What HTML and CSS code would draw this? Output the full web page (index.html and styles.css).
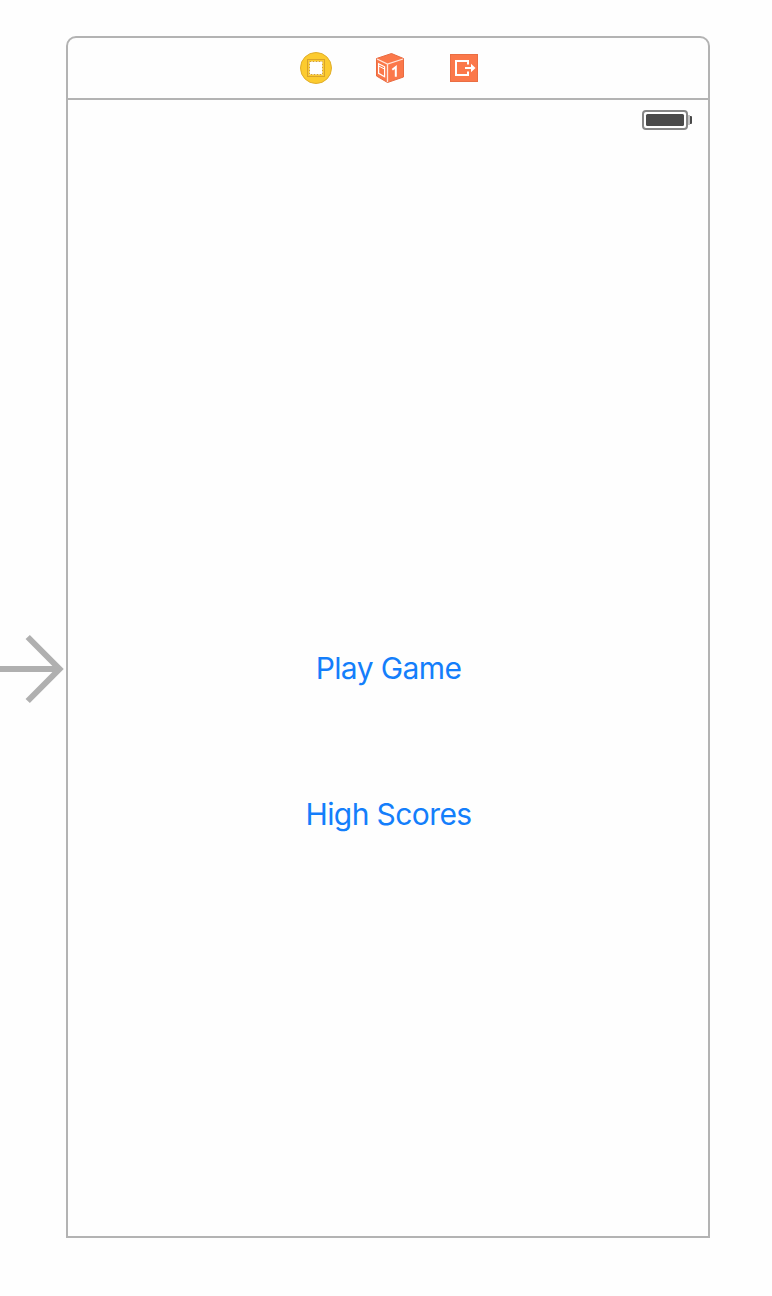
FILE: index.html
```html
<!DOCTYPE html>
<html lang="en">
<head>
<meta charset="utf-8">
<title>Storyboard</title>
<link rel="stylesheet" href="styles.css">
</head>
<body>
<main class="canvas">
  <div class="entry">
    <svg class="entry-arrow" width="66" height="70" viewBox="0 0 66 70" fill="none" stroke="#b0b0b0" stroke-width="6">
      <path d="M0 35H58M27.7 3L59.5 35L27.7 67"/>
    </svg>
  </div>
  <section class="scene">
    <header class="dock">
      <svg width="32" height="32" viewBox="0 0 32 32">
        <circle cx="16" cy="16" r="15.5" fill="#fccb2f" stroke="#e0ae2d"/>
        <rect x="7.5" y="7.5" width="17" height="17" fill="#fccb2f" stroke="#d9a42b"/>
        <rect x="9" y="9" width="14" height="14" fill="#fff"/>
        <rect x="9.5" y="9.5" width="13" height="13" fill="none" stroke="#d9a42b" stroke-dasharray="2 1"/>
      </svg>
      <svg width="32" height="32" viewBox="0 0 32 32">
        <path d="M2.5 6.5L17.5 1.5L29.5 6.5V25L13.5 30.5L2.5 24Z" fill="#fb784a" stroke="#e96b41"/>
        <path d="M3 7L13.5 12L29 7M13.5 12V30" fill="none" stroke="#ffe6dc" stroke-width="1.3"/>
        <path d="M4.6 11.8L10.6 14.8V24.8L4.6 21.3Z" fill="none" stroke="#fff" stroke-width="1.2"/>
        <path d="M5 14.2L10.5 17" fill="none" stroke="#fff"/>
        <path d="M18.3 17.8L21.8 15V24.8" fill="none" stroke="#fff" stroke-width="2"/>
      </svg>
      <svg width="32" height="32" viewBox="0 0 32 32">
        <rect x="2.5" y="2.5" width="27" height="27" fill="#fb784a" stroke="#ea6e43"/>
        <path d="M20 12.5V9H8V23H20V19.5M17 16H24" fill="none" stroke="#fff" stroke-width="2"/>
        <path d="M23 11.8L27.5 16L23 20.2Z" fill="#fff"/>
      </svg>
    </header>
    <div class="view">
      <div class="status">
        <svg width="50" height="20" viewBox="0 0 50 20">
          <rect x="1" y="1" width="44" height="18" rx="3" fill="#fff" stroke="#868686" stroke-width="2"/>
          <rect x="4" y="4" width="38" height="12" rx="1.5" fill="#4a4a4a"/>
          <path d="M46 5h2v10h-2z" fill="#c4c4c4"/>
          <path d="M48 6h1q1 0 1 1v6q0 1-1 1h-1z" fill="#4a4a4a"/>
        </svg>
      </div>
      <div class="menu">
        <button class="link play">Play Game</button>
        <button class="link scores">High Scores</button>
      </div>
    </div>
  </section>
</main>
</body>
</html>
```
FILE: styles.css
```css
* { box-sizing: border-box; }

body {
  margin: 0;
  background: #fefefe;
  font-family: Inter, "Liberation Sans", sans-serif;
}

.canvas {
  display: flex;
  height: 1296px;
  padding: 36px 62px 58px 0;
}

.entry {
  width: 66px;
  padding-top: 598px;
}

.entry-arrow { display: block; }

.scene {
  display: flex;
  flex: 1;
  flex-direction: column;
  border: 2px solid #b3b3b3;
  border-radius: 10px 10px 0 0;
  background: #fefefe;
}

.dock {
  display: flex;
  justify-content: center;
  align-items: center;
  gap: 42px;
  height: 62px;
  padding-left: 4px;
  border-bottom: 2px solid #b3b3b3;
}

.dock svg { display: block; }

.view { flex: 1; }

.status {
  display: flex;
  justify-content: flex-end;
  height: 40px;
  padding: 10px 16px 0 0;
}

.menu {
  display: flex;
  flex-direction: column;
  align-items: center;
  gap: 110px;
  padding: 510px 0 0 1px;
}

.link {
  padding: 0;
  border: 0;
  background: none;
  color: #147efb;
  font: 400 30px/36px Inter, "Liberation Sans", sans-serif;
  white-space: nowrap;
}

.play { letter-spacing: -0.6px; }
.scores { letter-spacing: -0.6px; }
```
